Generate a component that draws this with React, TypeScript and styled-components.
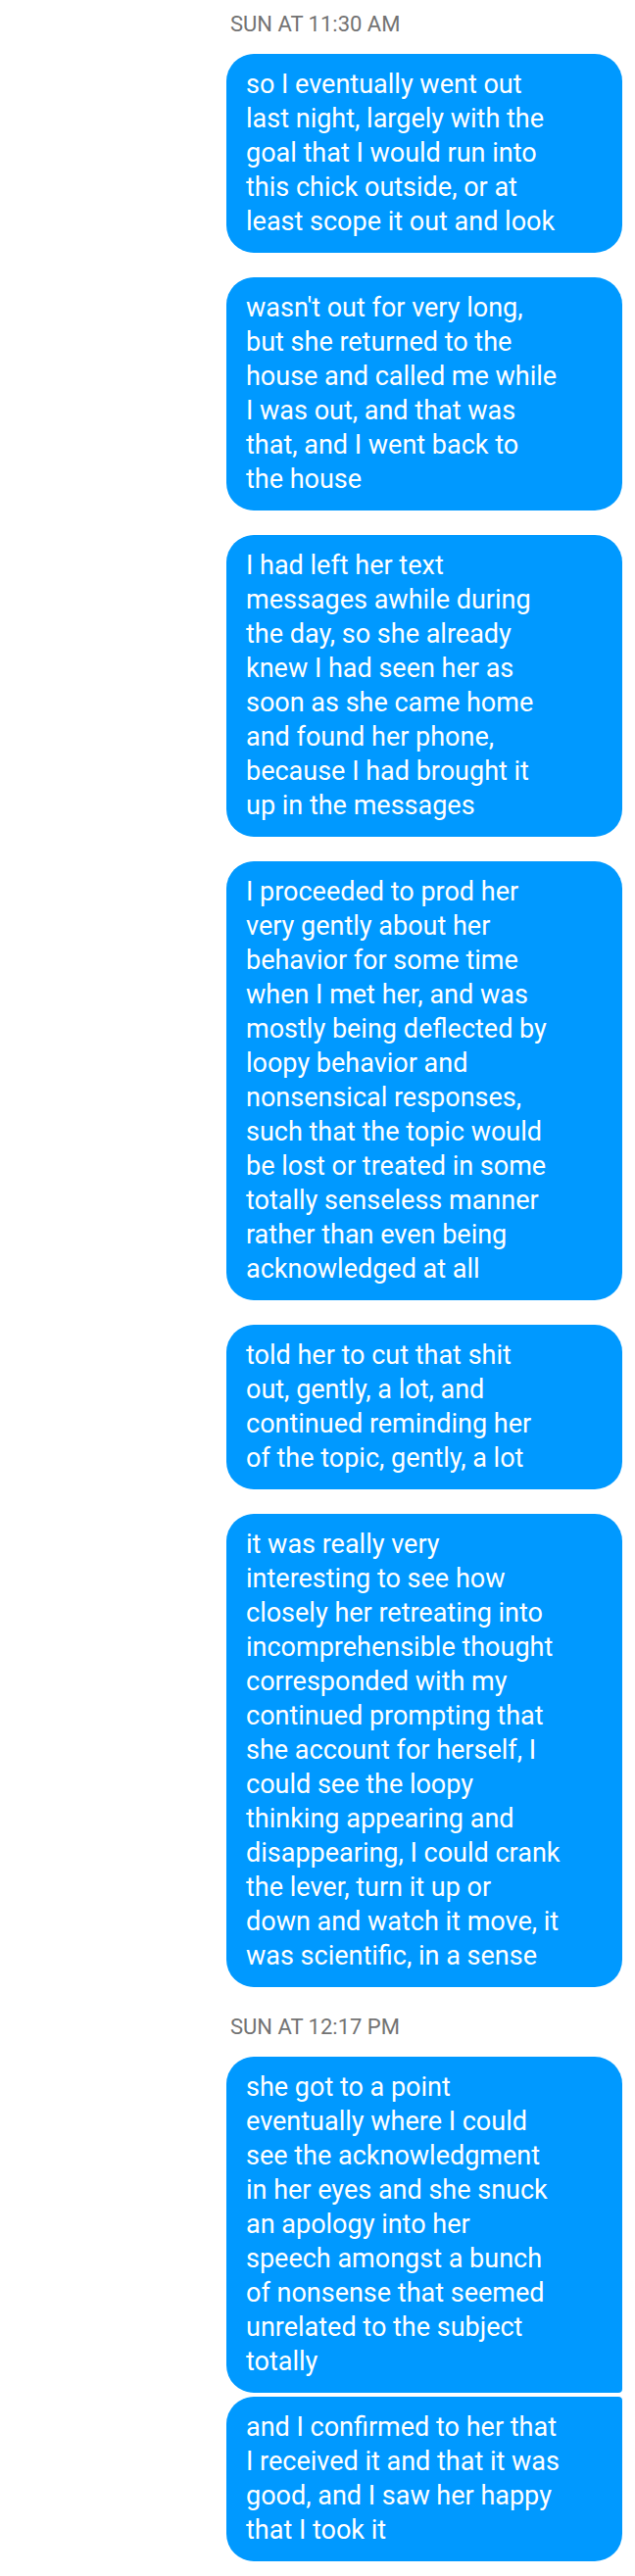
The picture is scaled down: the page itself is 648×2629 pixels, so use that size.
import React from "react";
import styled, { createGlobalStyle } from "styled-components";

const Global = createGlobalStyle`
  html, body { margin: 0; padding: 0; background: #ffffff; }
  body { font-family: Roboto, "Noto Sans", "Liberation Sans", sans-serif; -webkit-font-smoothing: antialiased; }
`;

const Thread = styled.div`
  width: 648px;
  box-sizing: border-box;
  padding: 12px 13px 13px 0;
  display: flex;
  flex-direction: column;
  align-items: flex-end;
`;

const Stamp = styled.div<{ $top: number }>`
  width: 404px;
  box-sizing: border-box;
  padding-left: 4px;
  margin-top: ${(p) => p.$top}px;
  margin-bottom: 17px;
  font-size: 22px;
  line-height: 26px;
  color: #737373;
  letter-spacing: 0;
`;

const Group = styled.div`
  display: flex;
  flex-direction: column;
  gap: 25px;
`;

const Bubble = styled.div<{ $pos: "single" | "first" | "last" }>`
  width: 404px;
  box-sizing: border-box;
  padding: 14px 12px 14px 20px;
  background: #0099ff;
  color: #ffffff;
  font-size: 27px;
  line-height: 35px;
  border-radius: ${(p) =>
    p.$pos === "first"
      ? "28px 28px 4px 28px"
      : p.$pos === "last"
      ? "28px 4px 28px 28px"
      : "28px"};
  margin-top: ${(p) => (p.$pos === "last" ? "-21px" : "0")};
`;

const Line = styled.span`
  display: block;
  white-space: nowrap;
`;

type Msg = { lines: string[]; pos?: "single" | "first" | "last" };

const first: Msg[] = [
  {
    lines: [
      "so I eventually went out",
      "last night, largely with the",
      "goal that I would run into",
      "this chick outside, or at",
      "least scope it out and look",
    ],
  },
  {
    lines: [
      "wasn't out for very long,",
      "but she returned to the",
      "house and called me while",
      "I was out, and that was",
      "that, and I went back to",
      "the house",
    ],
  },
  {
    lines: [
      "I had left her text",
      "messages awhile during",
      "the day, so she already",
      "knew I had seen her as",
      "soon as she came home",
      "and found her phone,",
      "because I had brought it",
      "up in the messages",
    ],
  },
  {
    lines: [
      "I proceeded to prod her",
      "very gently about her",
      "behavior for some time",
      "when I met her, and was",
      "mostly being deflected by",
      "loopy behavior and",
      "nonsensical responses,",
      "such that the topic would",
      "be lost or treated in some",
      "totally senseless manner",
      "rather than even being",
      "acknowledged at all",
    ],
  },
  {
    lines: [
      "told her to cut that shit",
      "out, gently, a lot, and",
      "continued reminding her",
      "of the topic, gently, a lot",
    ],
  },
  {
    lines: [
      "it was really very",
      "interesting to see how",
      "closely her retreating into",
      "incomprehensible thought",
      "corresponded with my",
      "continued prompting that",
      "she account for herself, I",
      "could see the loopy",
      "thinking appearing and",
      "disappearing, I could crank",
      "the lever, turn it up or",
      "down and watch it move, it",
      "was scientific, in a sense",
    ],
  },
];

const second: Msg[] = [
  {
    pos: "first",
    lines: [
      "she got to a point",
      "eventually where I could",
      "see the acknowledgment",
      "in her eyes and she snuck",
      "an apology into her",
      "speech amongst a bunch",
      "of nonsense that seemed",
      "unrelated to the subject",
      "totally",
    ],
  },
  {
    pos: "last",
    lines: [
      "and I confirmed to her that",
      "I received it and that it was",
      "good, and I saw her happy",
      "that I took it",
    ],
  },
];

const renderMsgs = (msgs: Msg[]) =>
  msgs.map((m, i) => (
    <Bubble key={i} $pos={m.pos ?? "single"}>
      {m.lines.map((l, j) => (
        <Line key={j}>{l}</Line>
      ))}
    </Bubble>
  ));

export default function App() {
  return (
    <>
      <Global />
      <Thread>
        <Stamp $top={0}>SUN AT 11:30 AM</Stamp>
        <Group>{renderMsgs(first)}</Group>
        <Stamp $top={28}>SUN AT 12:17 PM</Stamp>
        <Group>{renderMsgs(second)}</Group>
      </Thread>
    </>
  );
}
